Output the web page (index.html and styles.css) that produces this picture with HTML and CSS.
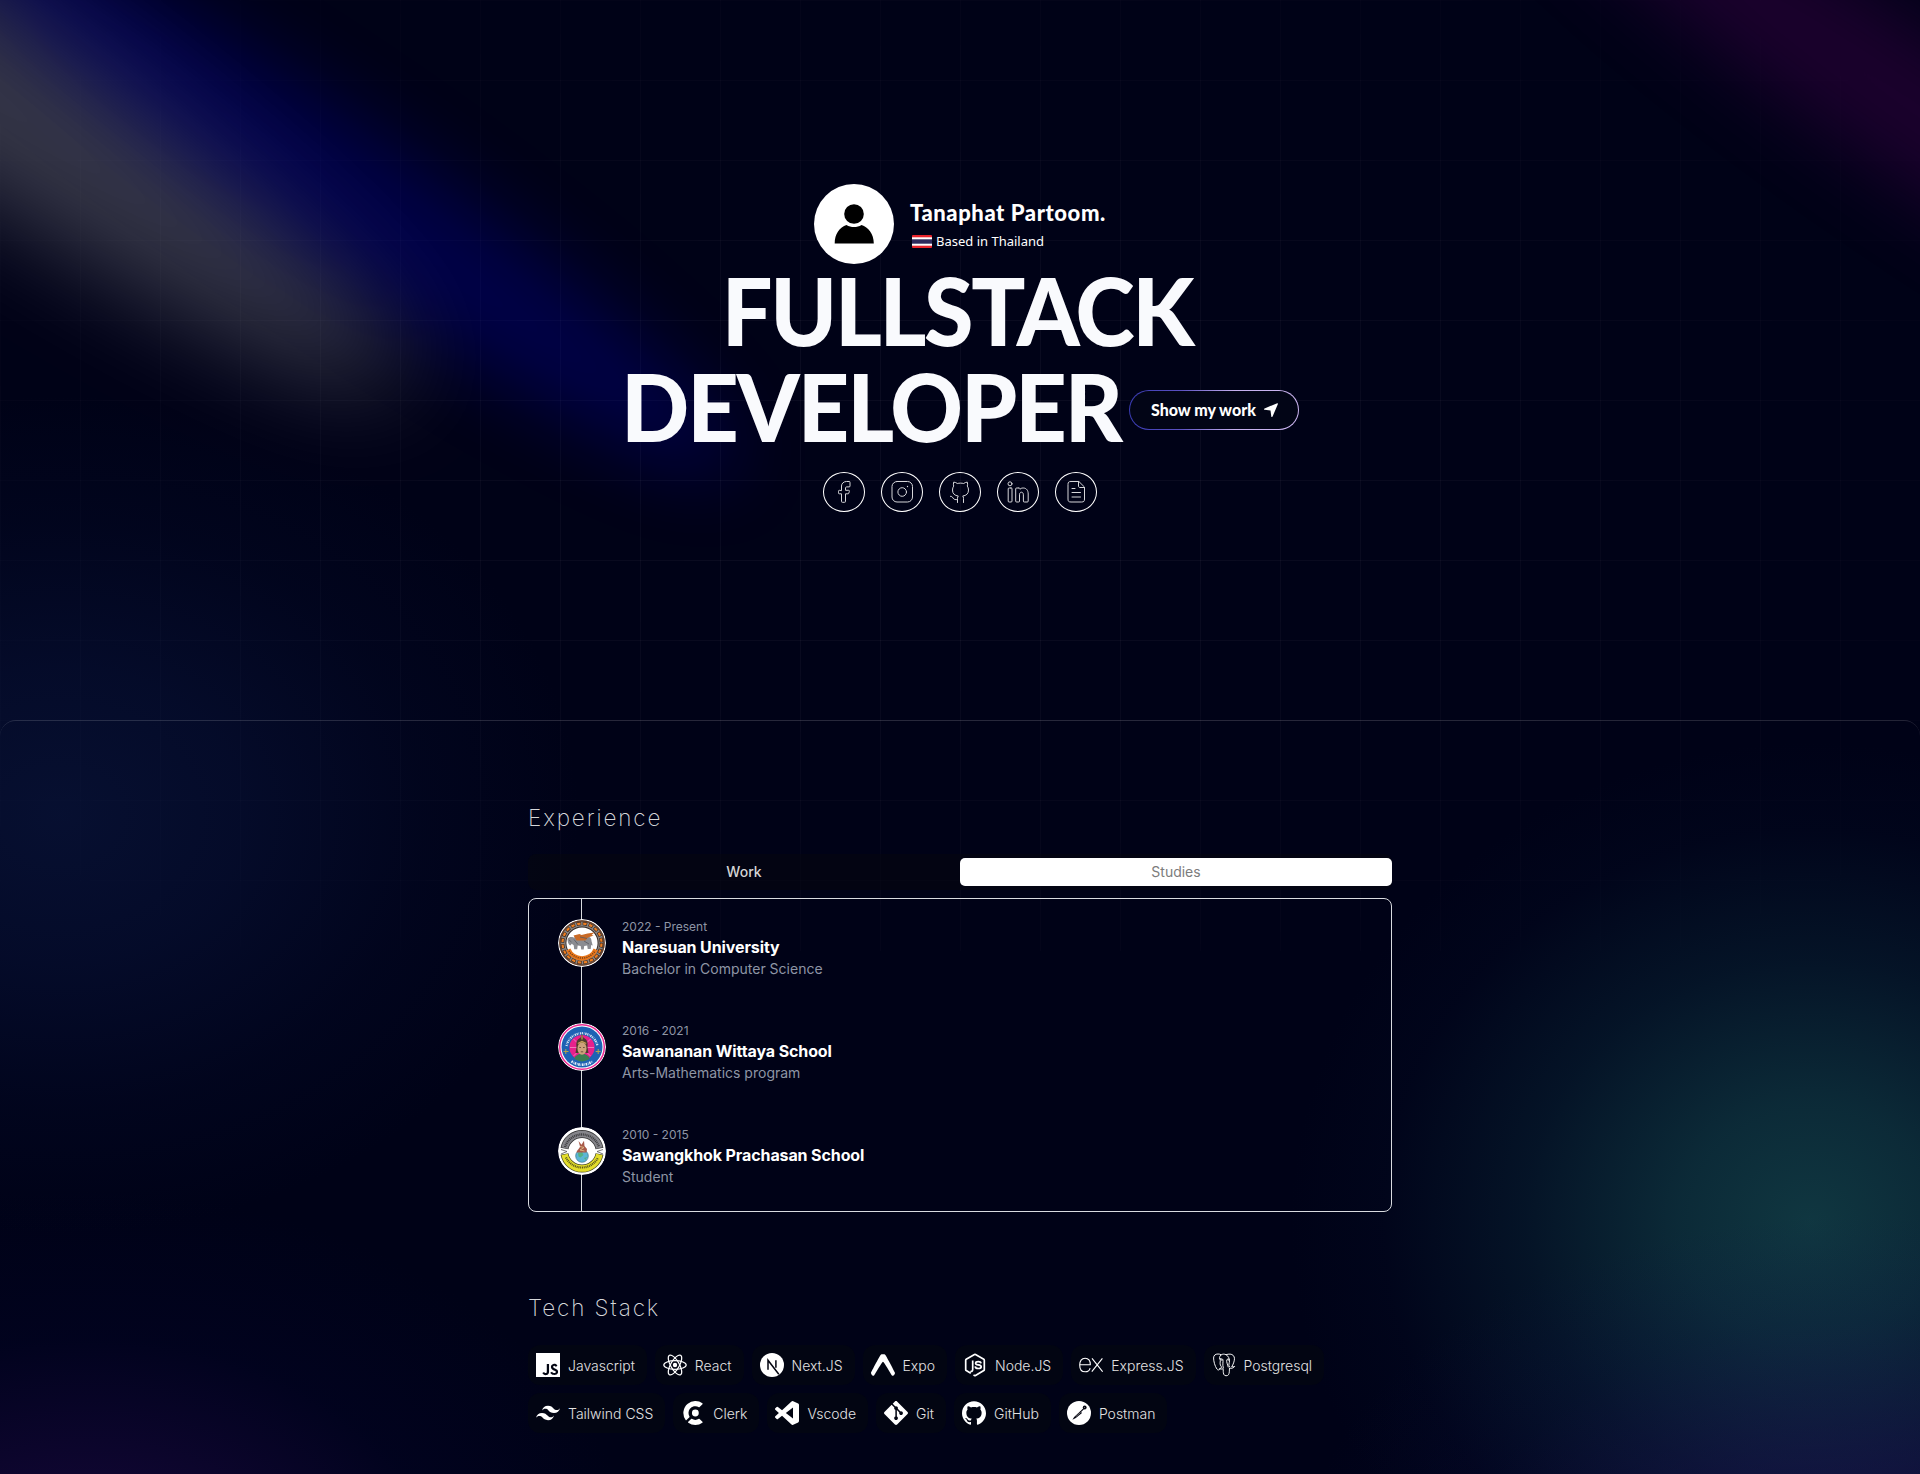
FILE: index.html
```html
<!DOCTYPE html>
<html lang="en">
<head>
<meta charset="utf-8">
<title>Tanaphat Partoom</title>
<link rel="stylesheet" href="styles.css">
</head>
<body>
<div class="page">
  <div class="grid-lines"></div>
  <svg class="spotlights" viewBox="0 0 1920 1474" aria-hidden="true">
    <defs>
      <filter id="blur-lg" x="-50%" y="-150%" width="200%" height="400%" color-interpolation-filters="sRGB"><feGaussianBlur stdDeviation="50.5"/></filter>
      <filter id="blur-md" x="-50%" y="-150%" width="200%" height="400%" color-interpolation-filters="sRGB"><feGaussianBlur stdDeviation="38.3"/></filter>
    </defs>
    <g filter="url(#blur-lg)"><ellipse rx="644" ry="91.5" transform="translate(-127 15) rotate(34.7)" fill="#fff" fill-opacity=".21"/></g>
    <g filter="url(#blur-md)"><ellipse rx="488" ry="69.3" transform="translate(1920 112) rotate(34.7)" fill="#800080" fill-opacity=".21"/></g>
    <g filter="url(#blur-md)"><ellipse rx="488" ry="69.3" transform="translate(334 190) rotate(34.7)" fill="#00f" fill-opacity=".21"/></g>
  </svg>

  <header class="hero">
    <div class="profile">
      <div class="avatar">
        <svg viewBox="0 0 80 80"><circle cx="40" cy="30" r="9.8"/><path d="M20.7 59.5c0-10 5-16 11.800-18.500 4.500 2.800 10.500 2.800 15 0 6.800 2.500 12.300 8.500 12.300 18.500z"/></svg>
      </div>
      <div class="profile-text">
        <p class="profile-name">Tanaphat Partoom.</p>
        <p class="profile-place">
          <svg class="flag" viewBox="0 0 20 13"><rect width="20" height="13" rx="1" fill="#e8242c"/><rect y="2.300" width="20" height="8.400" fill="#fff"/><rect y="4.300" width="20" height="4.400" fill="#2d2a5c"/></svg>
          <span>Based in Thailand</span>
        </p>
      </div>
    </div>
    <h1 class="headline">
      <span class="headline-one">FULLSTACK</span>
      <span class="headline-row">
        <span class="headline-two">DEVELOPER</span>
        <a class="cta"><span>Show my work</span>
          <svg viewBox="0 0 14 14"><path d="M13.200.2.600 5.400c-.9.400-.7 1.300.1 1.400l5.800.8.800 5.800c.1.800 1 .8 1.300.1L13.900.9c.2-.5-.2-.9-.7-.7z" fill="#fff"/></svg>
        </a>
      </span>
    </h1>
    <nav class="social">
      <a><svg viewBox="0 0 24 24"><path d="M7.500 10.300c-.8 0-1 .2-1 1v1.500c0 .8.200 1 1 1h2v7.500c0 .8.200 1 1 1h2c.8 0 1-.2 1-1v-7.500h2.400c.6 0 .800-.1.900-.7l.5-1.500c.3-.9.100-1.300-.8-1.300h-3V7.900c0-.6.500-1 1-1h2.500c.8 0 1-.2 1-1v-3.400c0-.8-.2-1-1-1h-2.500c-2.800 0-5 2-5 4.500v4.300z"/></svg></a>
      <a><svg viewBox="0 0 24 24"><rect x="2" y="1.500" width="20.500" height="20.500" rx="5"/><circle cx="12.200" cy="12" r="4.300"/><path d="M17.500 6.500h.01" stroke-width="1.300"/></svg></a>
      <a><svg viewBox="0 0 24 24"><path d="M9.500 22.500v-4c0-1.200.2-2 .8-2.500-3.600-.4-5.800-2.200-5.800-6 0-1.600.5-2.900 1.200-3.900-.4-1-.4-2.600 0-4 1.500 0 2.600.7 3.600 1.400 2-.5 4.400-.5 6.400 0 1-.7 2.100-1.400 3.600-1.400.4 1.400.4 3 0 4 .7 1 1.200 2.300 1.200 3.900 0 3.800-2.200 5.600-5.800 6 .6.500.8 1.300.8 2.500v4M9.500 19.500c-2.200.5-3.700 0-4.500-1.500-.7-1.300-1.500-1.700-2.500-1.700"/></svg></a>
      <a><svg viewBox="0 0 24 24"><circle cx="4" cy="3.800" r="2"/><path d="M5 8h-1.800c-.8 0-1 .2-1 1v12c0 .8.200 1 1 1H5c.8 0 1-.2 1-1V9c0-.8-.2-1-1-1zM12.500 8h-1.800c-.8 0-1 .2-1 1v12c0 .8.200 1 1 1h1.800c.8 0 1-.2 1-1v-6.200c0-1.500.6-2.600 1.900-2.600s2 1.100 2 2.600V21c0 .8.200 1 1 1h2.800c.8 0 1-.2 1-1v-7c0-3.500-1.700-6-5-6-1.700 0-2.500.5-3.200 1.300 0-.8-.2-1.300-1-1.300z"/></svg></a>
      <a><svg viewBox="0 0 24 24"><path d="M14.500 1.500H7c-2.300 0-3 .7-3 3v14.500c0 2.300.7 3 3 3h10.500c2.300 0 3-.7 3-3v-11.500zM14.500 1.500v4.500c0 1 .5 1.500 1.500 1.500h4.500M8 8.500h3M8 12.500h8.500M8 17h8.500"/></svg></a>
    </nav>
  </header>

  <main class="panel">
    <section class="content">
      <h2 class="section-title">Experience</h2>
      <div class="tabs">
        <button class="tab">Work</button>
        <button class="tab tab-active">Studies</button>
      </div>
      <ul class="timeline">
        <li class="entry">
          <svg class="emblem" viewBox="0 0 48 48">
            <circle cx="24" cy="24" r="24" fill="#fff"/><circle cx="24" cy="24" r="22.800" fill="#2e2420"/>
            <circle cx="24" cy="24" r="19" fill="none" stroke="#8b8480" stroke-width="5"/>
            <circle cx="24" cy="24" r="19.500" fill="none" stroke="#3a2a20" stroke-width="3.600" stroke-dasharray="4.600 1.530"/>
            <circle cx="24" cy="24" r="19.500" fill="none" stroke="#ec7d22" stroke-width="2.200" stroke-dasharray="3.400 2.730" stroke-dashoffset="-.6"/>
            <circle cx="24" cy="24" r="22.200" fill="none" stroke="#a4582a" stroke-width=".6"/>
            <circle cx="24" cy="24" r="15.600" fill="#fff"/>
            <path d="M10.300 30.500a15 15 0 0 0 27.400 0" fill="none" stroke="#e9771c" stroke-width="4.500"/>
            <path d="M11 32a15.500 15.500 0 0 0 26 0" fill="none" stroke="#6b3a16" stroke-width="1.500" stroke-dasharray="1 1.200"/>
            <path d="M9.500 20c1-2 4-2.500 6-1.500l12-1.500c4 0 6 2 6 5l1.200 4.500-1.500-.5-.5 4h-3l-.5-3.500-3 .5-.5 3.500h-2.500l-.5-3.500-3-.5-.5 3.800h-3l-.5-4-2-1.500-1 1.500c-1.500 0-3-2-3.200-6.300z" fill="#8b8c91"/>
            <path d="M15.500 16.500l6-1.500 2 1 6-1.500 7-1-3 2.500 2.200.5-5.700 2-2.500 3h-9z" fill="#c96a26"/>
            <path d="M16 20.500l4 5M22 18l7 1.500M26 22l5 3M11 21l2.500 2" stroke="#585b61" stroke-width=".8"/>
          </svg>
          <div class="entry-text">
            <p class="entry-date">2022 - Present</p>
            <h3 class="entry-title">Naresuan University</h3>
            <p class="entry-note">Bachelor in Computer Science</p>
          </div>
        </li>
        <li class="entry">
          <svg class="emblem" viewBox="0 0 48 48">
            <circle cx="24" cy="24" r="24" fill="#fff"/><circle cx="24" cy="24" r="22.300" fill="#fff" stroke="#ee2c93" stroke-width="1.500"/>
            <circle cx="24" cy="24" r="20.500" fill="#1e62b4"/>
            <path d="M8.500 23a15.800 15.800 0 0 1 31 0" fill="none" stroke="#d3e1f2" stroke-width="2.300" stroke-dasharray="1.100 .8 .5 .9 1.400 .7"/>
            <path d="M13.500 38.300a17.800 17.800 0 0 0 21 0" fill="none" stroke="#e3edf8" stroke-width="2.600" stroke-dasharray="1.600 .8 .6 .7"/>
            <path d="M7.800 26v5M5.500 28.500h5M40.200 26v5M37.700 28.500h5" stroke="#b4a24b" stroke-width="1"/>
            <circle cx="24" cy="24.500" r="12.600" fill="#e7208c"/>
            <path d="M12 24.500h24M24 12v24M15.500 16l17 17M32.500 16l-17 17" stroke="#f7a2cf" stroke-width=".7"/>
            <path d="M16.500 36c0-3 3-4 4.500-5h6c1.500 1 4.500 2 4.500 5a14 14 0 0 1-15 0z" fill="#3b7d52"/>
            <path d="M18.500 24c-1-7 2-8 4.200-9.500L24 10.500l1.300 4c2.200 1.500 5.200 2.500 4.200 9.500l1 6h-13z" fill="#4c3b2d"/>
            <ellipse cx="24" cy="25.500" rx="4.500" ry="6.200" fill="#cda27b"/>
            <path d="M19.800 20.500l4.200-2 4.200 2M24 12.500v4" stroke="#c7a457" stroke-width="1.200" fill="none"/>
            <path d="M21.300 24.500h1.700M25 24.500h1.700M22.800 28.800h2.400" stroke="#573c31" stroke-width=".8"/>
          </svg>
          <div class="entry-text">
            <p class="entry-date">2016 - 2021</p>
            <h3 class="entry-title">Sawananan Wittaya School</h3>
            <p class="entry-note">Arts-Mathematics program</p>
          </div>
        </li>
        <li class="entry">
          <svg class="emblem" viewBox="0 0 48 48">
            <circle cx="24" cy="24" r="24" fill="#fff"/>
            <path d="M6.500 21.500a17.800 17.800 0 0 1 35 0" fill="none" stroke="#333" stroke-width="8"/>
            <path d="M6.600 21a17.800 17.800 0 0 1 34.800 0" fill="none" stroke="#85858a" stroke-width="6.500"/>
            <path d="M7 20a17.800 17.800 0 0 1 34 0" fill="none" stroke="#3c3c3f" stroke-width="2.400" stroke-dasharray="1 .8"/>
            <path d="M6.500 27a17.800 17.800 0 0 0 35 0" fill="none" stroke="#4a4a20" stroke-width="8"/>
            <path d="M6.600 27.500a17.800 17.800 0 0 0 34.800 0" fill="none" stroke="#e3dd2a" stroke-width="6.500"/>
            <path d="M8 30.500a17.800 17.800 0 0 0 32 0" fill="none" stroke="#55521a" stroke-width="2.200" stroke-dasharray="1 .8"/>
            <path d="M3 22.500l6 2-6 2.500M45 22.500l-6 2 6 2.500" fill="#fff" stroke="#555" stroke-width=".8"/>
            <circle cx="24" cy="29" r="6.300" fill="#5bb6d6" stroke="#3b7792" stroke-width=".7"/>
            <path d="M20 26l4-1 1.500 3-3 2.500-2-1zM26 31l3-1-1.500 3z" fill="#54b184"/>
            <path d="M18.500 25.500c1-3.500 3-3.500 3.500-6l-1.500-5.500 3 3.800 2.500-4 .5 5.200 2.500 3-.5 3.500z" fill="#a85a49"/>
            <path d="M22 19.500l4 1-4 2.500 4.500 1" stroke="#ddbb88" stroke-width=".9" fill="none"/>
          </svg>
          <div class="entry-text">
            <p class="entry-date">2010 - 2015</p>
            <h3 class="entry-title">Sawangkhok Prachasan School</h3>
            <p class="entry-note">Student</p>
          </div>
        </li>
      </ul>

      <h2 class="section-title section-title-tech">Tech Stack</h2>
      <div class="stack">
        <div class="chip"><svg viewBox="0 0 24 24"><path d="M0 0h24v24H0V0zm22.034 18.276c-.175-1.095-.888-2.015-3.003-2.873-.736-.345-1.554-.585-1.797-1.140-.091-.33-.105-.51-.046-.705.15-.646.915-.84 1.515-.66.39.12.75.42.976.9 1.034-.676 1.034-.676 1.755-1.125-.27-.42-.404-.601-.586-.78-.63-.705-1.469-1.065-2.834-1.034l-.705.089c-.676.165-1.320.525-1.710 1.005-1.140 1.291-.811 3.541.569 4.471 1.365 1.020 3.361 1.244 3.616 2.205.24 1.170-.87 1.545-1.966 1.410-.811-.18-1.260-.586-1.755-1.336l-1.830 1.051c.21.48.45.689.81 1.109 1.740 1.756 6.090 1.666 6.871-1.004.029-.09.24-.705.074-1.650l.046.067zm-8.983-7.245h-2.248c0 1.938-.009 3.864-.009 5.805 0 1.232.063 2.363-.138 2.711-.33.689-1.180.601-1.566.48-.396-.196-.597-.466-.83-.855-.063-.105-.11-.196-.127-.196l-1.825 1.125c.305.63.75 1.172 1.324 1.517.855.51 2.004.675 3.207.405.783-.226 1.458-.691 1.811-1.411.51-.93.402-2.070.397-3.346.012-2.054 0-4.109 0-6.179l.004-.056z"/></svg><span>Javascript</span></div>
        <div class="chip"><svg viewBox="0 0 24 24"><circle cx="12" cy="12" r="2.200"/><g class="line" stroke-width="1.200"><ellipse cx="12" cy="12" rx="11.200" ry="4.300"/><ellipse cx="12" cy="12" rx="11.200" ry="4.300" transform="rotate(60 12 12)"/><ellipse cx="12" cy="12" rx="11.200" ry="4.300" transform="rotate(120 12 12)"/></g></svg><span>React</span></div>
        <div class="chip"><svg viewBox="0 0 24 24"><circle cx="12" cy="12" r="12"/><path d="M8 16.800V7.300L18.800 21.300M15.900 7.200v7.500" fill="none" stroke="#030410" stroke-width="1.500"/></svg><span>Next.JS</span></div>
        <div class="chip"><svg viewBox="0 0 24 24"><path d="M0 20.084c.043.53.23 1.063.718 1.778.58.849 1.576 1.315 2.303.567.49-.505 5.794-9.776 8.350-13.290a.761.761 0 011.248 0c2.556 3.514 7.860 12.785 8.350 13.290.727.748 1.723.282 2.303-.567.57-.835.728-1.420.728-2.046 0-.426-8.260-15.798-9.092-17.078-.8-1.230-1.044-1.498-2.397-1.542h-1.032c-1.353.044-1.597.311-2.398 1.542C8.267 3.991.33 18.758 0 19.770z"/></svg><span>Expo</span></div>
        <div class="chip"><svg viewBox="0 0 24 24"><g class="line" stroke-width="1.700"><path d="M7.800 20.200l-4.600-2.600a1 1 0 0 1-.5-.9V7.200c0-.4.200-.7.500-.9l8.300-4.800a1 1 0 0 1 1 0l8.300 4.800c.3.200.5.500.5.900v9.500c0 .4-.2.700-.5.900L12.500 22.600a1 1 0 0 1-1 0l-1-.6"/><path d="M9.700 7.500v8.700c0 1.700-.8 2.500-2.300 2"/><path d="M18 10.300c-.2-1.200-1-1.700-2.700-1.700-1.700 0-2.700.5-2.700 1.600 0 2.600 5.600.8 5.600 3.500 0 1.200-1.100 1.800-2.900 1.800-2 0-3-.7-3.100-2.100"/></g></svg><span>Node.JS</span></div>
        <div class="chip"><svg viewBox="0 0 24 24"><path class="line" stroke-width="1.100" d="M.7 11.700h10.600c.1-4-1.800-6.500-5.200-6.500-3.500 0-5.400 2.700-5.400 6.700 0 4.200 2 6.900 5.500 6.900 2.600 0 4.400-1.300 4.900-3.700M13 5.300l10.600 13.400M23.400 5.300L12.800 18.700"/></svg><span>Express.JS</span></div>
        <div class="chip"><svg viewBox="0 0 24 24"><path class="line" stroke-width=".95" d="M8.400 15.600c-1.400 1.700-2.500 1.800-3.500.4C2.900 13 1.600 8.500 1.600 5 1.600 2.300 3.300 1 6 1c1.300 0 2.300.3 3.200.8 1.400-.8 3.100-.9 4.800-.1 3-.9 5.600-.9 7.300.8 1.700 1.700 1.300 4.600.3 7.400-.5 1.500-1.200 2.800-1.900 3.800 1 .3 2 .1 3-.3-.8 1.500-3.300 2.400-5.200 1.600-.2 2.900 0 5.100-1 6.700-.9 1.500-4.100 1.500-4.800-.5-.7-2-.3-3.800-.6-5.600-1 .6-2.500.6-3.700.1.800-.7 2.200-.5 2.200-1.300 0-1-1.400-1.700-1.500-3.600 0-2.500.5-3.700.1-5.600M9.200 1.800C7 3.500 7.400 6 7.800 6.400c1-.8 2.800-.7 3.100.3.500 2-.7 4.400.5 8.600M14 1.700c2.500 1.300 3.500 4.300 3.500 6.200 0 2.300-1.500 4.200.2 6.200M17.600 6.500c-1-.9-2.500-.6-2.800.5-.6 2 .8 4.100 1.500 7.400"/><path d="M9 6.500h1.500v1H9zM15.700 6.500h1.500v1h-1.500z"/></svg><span>Postgresql</span></div>
        <div class="chip"><svg viewBox="0 0 24 24"><path d="M12.001 4.800c-3.200 0-5.200 1.600-6 4.800 1.200-1.600 2.600-2.200 4.200-1.800.913.228 1.565.89 2.288 1.624C13.666 10.618 15.027 12 18.001 12c3.200 0 5.200-1.600 6-4.800-1.200 1.600-2.600 2.200-4.200 1.800-.913-.228-1.565-.89-2.288-1.624C16.337 6.182 14.976 4.800 12.001 4.800zM6.001 12c-3.200 0-5.200 1.600-6 4.800 1.200-1.600 2.600-2.200 4.200-1.800.913.228 1.565.89 2.288 1.624 1.177 1.194 2.538 2.576 5.512 2.576 3.200 0 5.200-1.600 6-4.800-1.200 1.600-2.600 2.200-4.200 1.800-.913-.228-1.565-.89-2.288-1.624C10.337 13.382 8.976 12 6.001 12z"/></svg><span>Tailwind CSS</span></div>
        <div class="chip"><svg viewBox="0 0 24 24"><path d="m21.470 20.829-2.881-2.881a.572.572 0 0 0-.7-.084 6.854 6.854 0 0 1-7.081 0 .576.576 0 0 0-.7.084l-2.881 2.881a.576.576 0 0 0-.103.69.57.57 0 0 0 .166.186 12 12 0 0 0 14.113 0 .58.58 0 0 0 .239-.423.576.576 0 0 0-.172-.453Zm.002-17.668-2.880 2.880a.569.569 0 0 1-.701.084A6.857 6.857 0 0 0 8.724 8.080a6.862 6.862 0 0 0-1.222 3.692 6.860 6.860 0 0 0 .978 3.764.573.573 0 0 1-.083.699l-2.881 2.880a.567.567 0 0 1-.864-.063A11.993 11.993 0 0 1 6.771 2.700a11.990 11.990 0 0 1 14.637-.405.566.566 0 0 1 .232.418.57.57 0 0 1-.168.448Zm-7.118 12.261a3.427 3.427 0 1 0 0-6.854 3.427 3.427 0 0 0 0 6.854Z"/></svg><span>Clerk</span></div>
        <div class="chip"><svg viewBox="0 0 24 24"><path d="M23.150 2.587L18.210.21a1.494 1.494 0 0 0-1.705.29l-9.460 8.630-4.120-3.128a.999.999 0 0 0-1.276.057L.327 7.261A1 1 0 0 0 .326 8.740L3.899 12 .326 15.260a1 1 0 0 0 .001 1.479L1.650 17.940a.999.999 0 0 0 1.276.057l4.120-3.128 9.460 8.630a1.492 1.492 0 0 0 1.704.29l4.942-2.377A1.500 1.500 0 0 0 24 20.060V3.939a1.500 1.500 0 0 0-.85-1.352zm-5.146 14.861L10.826 12l7.178-5.448v10.896z"/></svg><span>Vscode</span></div>
        <div class="chip"><svg viewBox="0 0 24 24"><path d="M23.546 10.930L13.067.452c-.604-.603-1.582-.603-2.188 0L8.708 2.627l2.760 2.760c.645-.215 1.379-.07 1.889.441.516.515.658 1.258.438 1.900l2.658 2.660c.645-.223 1.387-.078 1.900.435.721.72.721 1.884 0 2.604-.719.719-1.881.719-2.600 0-.539-.541-.674-1.337-.404-1.996L12.860 8.955v6.525c.176.086.342.203.488.348.713.721.713 1.883 0 2.600-.719.721-1.889.721-2.609 0-.719-.719-.719-1.879 0-2.598.182-.18.387-.316.605-.406V8.835c-.217-.091-.424-.222-.6-.401-.545-.545-.676-1.342-.396-2.009L7.636 3.700.45 10.881c-.6.605-.6 1.584 0 2.189l10.480 10.477c.604.604 1.582.604 2.186 0l10.430-10.430c.605-.603.605-1.582 0-2.187"/></svg><span>Git</span></div>
        <div class="chip"><svg viewBox="0 0 24 24"><path d="M12 .297c-6.630 0-12 5.373-12 12 0 5.303 3.438 9.800 8.205 11.385.6.113.82-.258.82-.577 0-.285-.01-1.040-.015-2.040-3.338.724-4.042-1.610-4.042-1.610C4.422 18.070 3.633 17.700 3.633 17.700c-1.087-.744.084-.729.084-.729 1.205.084 1.838 1.236 1.838 1.236 1.070 1.835 2.809 1.305 3.495.998.108-.776.417-1.305.76-1.605-2.665-.3-5.466-1.332-5.466-5.930 0-1.310.465-2.380 1.235-3.220-.135-.303-.54-1.523.105-3.176 0 0 1.005-.322 3.300 1.230.96-.267 1.980-.399 3-.405 1.020.006 2.040.138 3 .405 2.280-1.552 3.285-1.230 3.285-1.230.645 1.653.24 2.873.12 3.176.765.84 1.230 1.910 1.230 3.220 0 4.610-2.805 5.625-5.475 5.920.42.36.81 1.096.81 2.220 0 1.606-.015 2.896-.015 3.286 0 .315.21.69.825.57C20.565 22.092 24 17.592 24 12.297c0-6.627-5.373-12-12-12"/></svg><span>GitHub</span></div>
        <div class="chip"><svg viewBox="0 0 24 24"><circle cx="12" cy="12" r="12"/><g fill="#030410"><path d="M5.400 18.800l1.700-2.800 6.200-5.800 1.700 1.700-6.200 5z"/><circle cx="17.700" cy="6.500" r="1.900"/></g><path d="M13.200 11.200L17 7.400" fill="none" stroke="#030410" stroke-width="1.100"/><path d="M8.700 15.700l5-4.300M17 6.200l1.200.8" stroke="#bbb" stroke-width=".6"/></svg><span>Postman</span></div>
      </div>
    </section>
  </main>
</div>
</body>
</html>
```
FILE: styles.css
```css
* { box-sizing: border-box; margin: 0; padding: 0; }

body {
  background: #000217;
  color: #fff;
  font-family: Inter, "Noto Sans", sans-serif;
}

.page {
  position: relative;
  height: 1474px;
  overflow: hidden;
  background:
    radial-gradient(520px 420px at 60px 815px, rgba(16, 34, 84, .42), rgba(14, 31, 82, .31) 35%, rgba(12, 28, 80, .11) 70%, transparent),
    radial-gradient(560px 420px at 90px 1610px, rgba(44, 14, 90, .56), rgba(40, 12, 90, .38) 30%, rgba(10, 8, 80, .12) 65%, transparent),
    radial-gradient(560px 360px at 1860px 1570px, rgba(40, 20, 100, .5), rgba(34, 20, 96, .36) 35%, rgba(20, 20, 90, .12) 70%, transparent),
    radial-gradient(520px 480px at 1810px 1222px, rgba(24, 82, 86, .66), rgba(21, 75, 82, .55) 25%, rgba(14, 56, 72, .32) 55%, rgba(8, 30, 60, .1) 82%, transparent),
    #000217;
}

/* decorative layers behind the content */
.grid-lines {
  position: absolute;
  inset: 0 0 auto;
  height: 951px;
  background:
    linear-gradient(rgba(255, 255, 255, .04) 1px, transparent 1px) 0 0 / 80px 80px,
    linear-gradient(90deg, rgba(255, 255, 255, .04) 1px, transparent 1px) 0 0 / 80px 80px;
  -webkit-mask-image: radial-gradient(ellipse at center, #000 20%, transparent);
  mask-image: radial-gradient(ellipse at center, #000 20%, transparent);
}
.spotlights { position: absolute; inset: 0; width: 1920px; height: 1474px; }

.hero {
  position: relative;
  height: 720px;
  padding-top: 184px;
  display: flex;
  flex-direction: column;
  align-items: center;
}

.profile { display: flex; gap: 16px; height: 80px; }
.avatar { width: 80px; height: 80px; border-radius: 50%; background: #fff; }
.avatar svg { display: block; }
.profile-text { width: 196px; padding-top: 14px; }
.profile-name {
  font: 900 22px/30px Lato, sans-serif;
  white-space: nowrap;
  letter-spacing: .58px;
}
.profile-place {
  display: flex;
  align-items: center;
  gap: 4px;
  padding-left: 2px;
  font: 400 13px/26px "Noto Sans", sans-serif;
  white-space: nowrap;
}
.flag { width: 20px; height: 13px; }

.headline {
  margin-top: -2px;
  display: flex;
  flex-direction: column;
  align-items: center;
  font: 900 93.500px/96px Lato, sans-serif;
  color: #f9fafd;
}
.headline-one {
  letter-spacing: -2.400px;
  margin-right: 5px;
  transform: scaleX(.96);
}
.headline-two {
  letter-spacing: -2.100px;
  margin-right: -24px;
  transform: scaleX(.96);
  transform-origin: left;
}
.headline-row { display: flex; align-items: center; gap: 12px; }

.cta {
  display: flex;
  align-items: center;
  justify-content: center;
  gap: 8px;
  width: 170px;
  height: 40px;
  margin-top: 8px;
  border: 1px solid transparent;
  border-radius: 20px;
  background:
    linear-gradient(#020516, #020516) padding-box,
    linear-gradient(90deg, #393bb2, #5a50c0 30%, #c5b0ee 62%, #cdb6f2) border-box;
  font: 900 16px/20px Lato, sans-serif;
  color: #fff;
}
.cta svg { width: 14px; height: 14px; }

.social { display: flex; gap: 16px; margin-top: 18px; }
.social a {
  width: 42px;
  height: 40px;
  border: 1px solid #fff;
  border-radius: 50%;
  display: flex;
  align-items: center;
  justify-content: center;
}
.social svg {
  width: 24px;
  height: 24px;
  fill: none;
  stroke: #d6d6da;
  stroke-width: 1;
  stroke-linecap: round;
  stroke-linejoin: round;
}

.panel {
  position: relative;
  height: 800px;
  padding-top: 82px;
  border: 1px solid rgba(255, 255, 255, .13);
  border-width: 1px 0 0;
  border-radius: 16px 16px 0 0;
}
.content { width: 864px; margin: 0 auto; }

.section-title {
  font-size: 22.500px;
  font-weight: 200;
  line-height: 30px;
  letter-spacing: 1.900px;
  color: #d5d7da;
}
.section-title-tech { margin-top: 81px; }

.tabs {
  display: flex;
  height: 36px;
  margin-top: 21px;
  padding: 4px 0;
  border-radius: 8px;
  background: rgba(5, 8, 14, .55);
}
.tab {
  flex: 1;
  border: 0;
  border-radius: 5px;
  background: none;
  font: 500 14px/20px Inter, sans-serif;
  color: #d4d4d4;
}
.tab-active { background: #fff; color: #7c7c7c; font-weight: 400; }

.timeline {
  position: relative;
  margin-top: 8px;
  height: 314px;
  padding: 20px 29px;
  border: 1px solid #d9dbe0;
  border-radius: 8px;
  list-style: none;
}
.timeline::before {
  content: "";
  position: absolute;
  left: 52px;
  top: 0;
  bottom: 0;
  width: 1px;
  background: #d9dbe0;
}
.entry { position: relative; display: flex; gap: 16px; height: 104px; }
.emblem { width: 48px; height: 48px; border-radius: 50%; }
.entry-date { font-size: 12px; line-height: 16px; color: #8e95a5; }
.entry-title { font-size: 16px; font-weight: 700; line-height: 24px; letter-spacing: -.11px; }
.entry-note { font-size: 14px; line-height: 20px; color: #8e95a5; }

.stack { display: flex; flex-wrap: wrap; gap: 8px; margin-top: 22px; }
.chip {
  display: flex;
  align-items: center;
  gap: 8px;
  height: 40px;
  padding: 0 12px 0 8px;
  border-radius: 12px;
  background: rgba(5, 8, 14, .45);
  font-size: 14px;
  font-weight: 300;
  color: #e2e2e2;
}
.chip svg { width: 24px; height: 24px; fill: #fff; }
.chip .line { fill: none; stroke: #fff; }
```
